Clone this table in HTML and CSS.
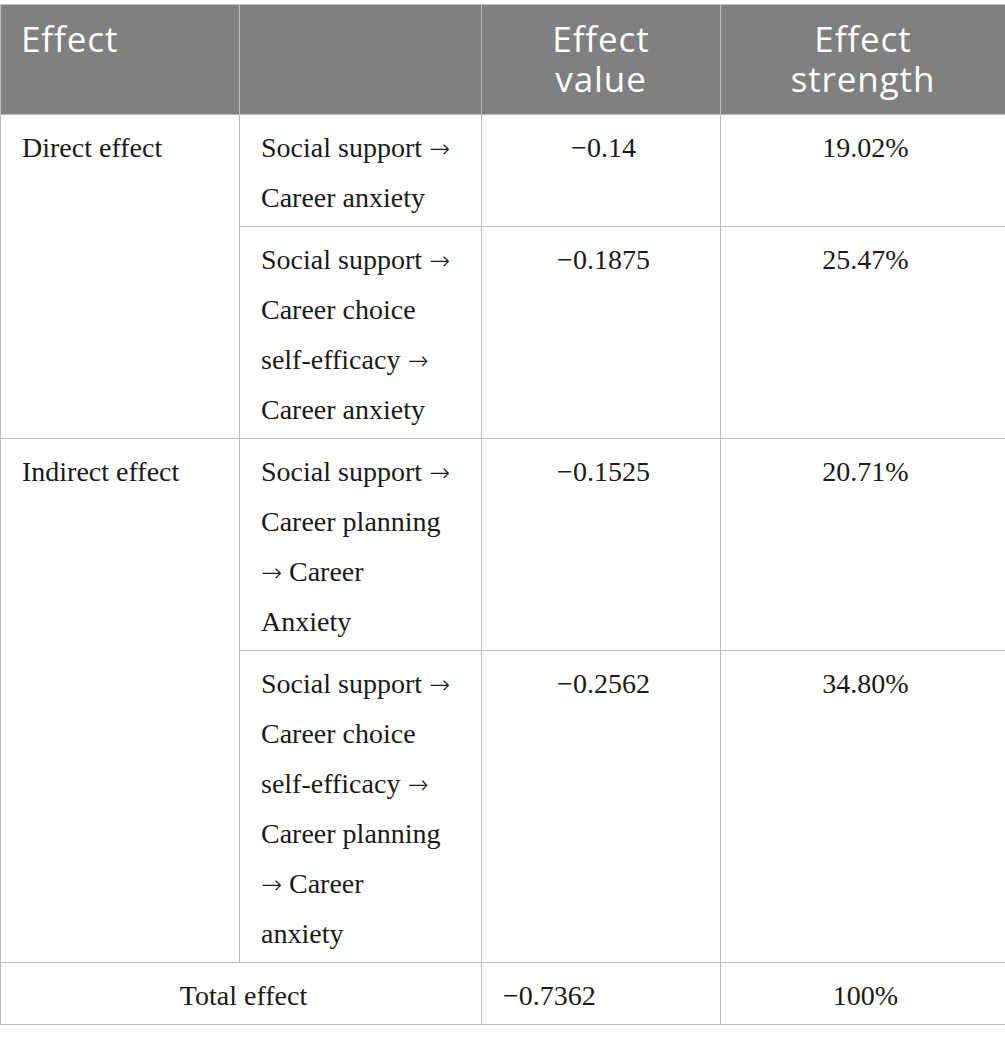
FILE: index.html
```html
<!DOCTYPE html>
<html>
<head>
<meta charset="utf-8">
<link rel="stylesheet" href="styles.css">
</head>
<body>
<table class="tbl">
  <colgroup>
    <col class="c1"><col class="c2"><col class="c3"><col class="c4">
  </colgroup>
  <thead>
    <tr>
      <th class="left">Effect</th>
      <th></th>
      <th>Effect<br>value</th>
      <th>Effect<br>strength</th>
    </tr>
  </thead>
  <tbody>
    <tr>
      <td rowspan="2">Direct effect</td>
      <td>Social support&nbsp;<span class="ar">→</span><br>Career anxiety</td>
      <td class="ctr">−0.14</td>
      <td class="ctr">19.02%</td>
    </tr>
    <tr>
      <td>Social support&nbsp;<span class="ar">→</span><br>Career choice<br>self-efficacy&nbsp;<span class="ar">→</span><br>Career anxiety</td>
      <td class="ctr">−0.1875</td>
      <td class="ctr">25.47%</td>
    </tr>
    <tr>
      <td rowspan="2">Indirect effect</td>
      <td>Social support&nbsp;<span class="ar">→</span><br>Career planning<br><span class="ar">→</span>&nbsp;Career<br>Anxiety</td>
      <td class="ctr">−0.1525</td>
      <td class="ctr">20.71%</td>
    </tr>
    <tr>
      <td>Social support&nbsp;<span class="ar">→</span><br>Career choice<br>self-efficacy&nbsp;<span class="ar">→</span><br>Career planning<br><span class="ar">→</span>&nbsp;Career<br>anxiety</td>
      <td class="ctr">−0.2562</td>
      <td class="ctr">34.80%</td>
    </tr>
    <tr>
      <td colspan="2" class="ctr">Total effect</td>
      <td>−0.7362</td>
      <td class="ctr">100%</td>
    </tr>
  </tbody>
</table>
</body>
</html>
```

FILE: styles.css
```css
html, body {
  margin: 0;
  padding: 0;
  background: #ffffff;
}
body {
  padding-top: 4px;
}
.tbl {
  border-collapse: collapse;
  table-layout: fixed;
  width: 1005px;
}
.c1 { width: 239px; }
.c2 { width: 242px; }
.c3 { width: 239px; }
.c4 { width: 285px; }
.tbl th, .tbl td {
  border: 1px solid #bdbdbd;
  vertical-align: top;
}
.tbl th {
  background: #808080;
  color: #ffffff;
  font-family: "Open Sans", sans-serif;
  font-weight: 400;
  font-size: 35px;
  line-height: 40px;
  text-align: center;
  padding: 14px 20px 15px;
  height: 80px;
  letter-spacing: 0.9px;
}
.tbl th.left {
  text-align: left;
}
.tbl td {
  font-family: "Liberation Serif", "Times New Roman", serif;
  font-size: 28px;
  line-height: 50px;
  color: #1a1a1a;
  padding: 8px 16px 3px 21px;
  text-align: left;
}
.tbl td.ctr {
  text-align: center;
}
.ar {
  font-family: "DejaVu Sans", sans-serif;
  font-weight: 200;
  font-size: 25px;
  line-height: 0;
}
```
